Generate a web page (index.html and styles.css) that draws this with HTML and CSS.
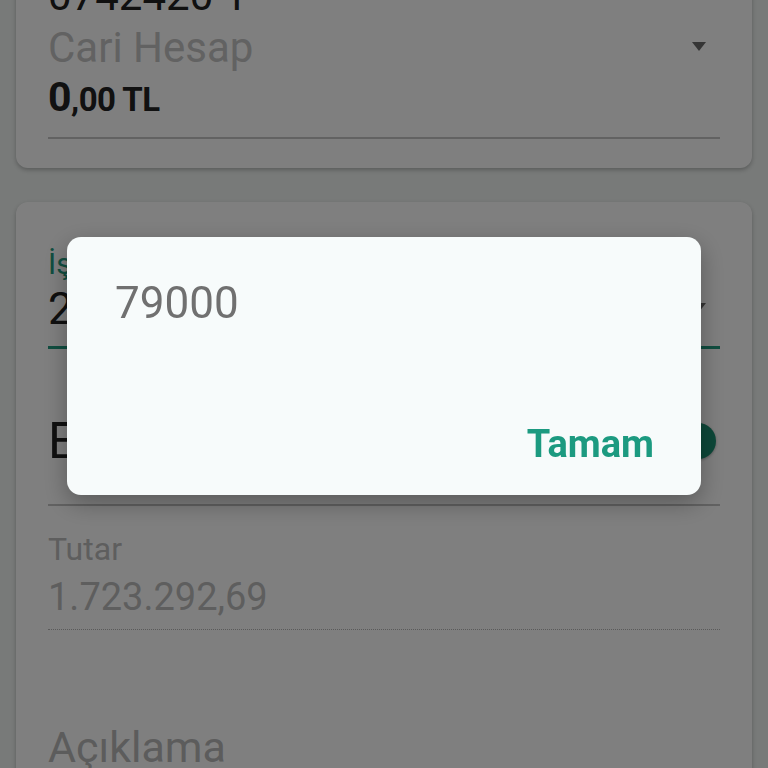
FILE: index.html
```html
<!DOCTYPE html>
<html lang="tr">
<head>
    <meta charset="UTF-8">
    <meta name="viewport" content="width=device-width, initial-scale=1.0">
    <title>Havale</title>
    <link rel="stylesheet" href="styles.css">
</head>
<body>
    <main class="page">
        <section class="card account-card">
            <div class="account-no">0742420 1</div>
            <div class="select-row">
                <span class="select-text">Cari Hesap</span>
                <span class="caret"></span>
            </div>
            <div class="balance"><span class="big">0</span>,00 TL</div>
        </section>

        <section class="card form-card">
            <div class="field field-active">
                <label class="field-label">İşlem Tarihi</label>
                <div class="select-row">
                    <span class="field-value">25.01.2024</span>
                    <span class="caret"></span>
                </div>
            </div>

            <div class="field switch-row">
                <span class="switch-text">EFT</span>
                <span class="switch"><span class="thumb"></span></span>
            </div>

            <div class="field field-disabled">
                <label class="field-label">Tutar</label>
                <div class="amount">1.723.292,69</div>
            </div>

            <div class="field field-hint">Açıklama</div>
        </section>
    </main>

    <div class="scrim"></div>
    <div class="dialog">
        <div class="dialog-text">79000</div>
        <div class="dialog-actions">
            <button class="dialog-button">Tamam</button>
        </div>
    </div>
</body>
</html>
```

FILE: styles.css
```css
body {
    font-family: Roboto, "Noto Sans", Arial, sans-serif;
    margin: 0;
    background-color: #f0f4f2;
    overflow: hidden;
    height: 768px;
}
.page {
    padding: 0 16px;
}
.card {
    background-color: white;
    border-radius: 12px;
    padding: 0 32px;
    box-shadow: 0 2px 4px rgba(0, 0, 0, 0.25);
}

/* hesap kartı (sayfa biraz aşağı kaydırılmış) */
.account-card {
    margin-top: -60px;
    padding-top: 30px;
    padding-bottom: 29px;
}
.account-no {
    font-size: 42px;
    line-height: 52px;
    color: #212121;
}
.select-row {
    display: flex;
    justify-content: space-between;
}
.select-text {
    font-size: 42px;
    line-height: 52px;
    color: #c4c4c4;
}
.caret {
    width: 0;
    height: 0;
    border-left: 7px solid transparent;
    border-right: 7px solid transparent;
    border-top: 9px solid #6a6a6a;
    margin: 20px 14px 0 0;
}
.balance {
    font-size: 33px;
    font-weight: bold;
    line-height: 46px;
    color: #222;
    letter-spacing: -0.5px;
    padding-bottom: 14px;
    border-bottom: 2px solid #c4c4c4;
}
.balance .big {
    font-size: 41px;
}

/* form kartı */
.form-card {
    margin-top: 34px;
    padding-top: 43px;
    height: 700px;
}
.field-label {
    display: block;
    font-size: 30px;
    line-height: 38px;
}
.field-active .field-label {
    color: #229c80;
}
.field-active {
    padding-bottom: 11px;
    border-bottom: 3px solid #229c80;
}
.field-value {
    font-size: 45px;
    line-height: 52px;
    color: #212121;
}
.field-active .caret {
    margin-top: 20px;
}
.switch-row {
    display: flex;
    justify-content: space-between;
    align-items: center;
    margin-top: 62px;
    padding-bottom: 33px;
    border-bottom: 2px solid #c4c4c4;
}
.switch-text {
    font-size: 50px;
    line-height: 60px;
    color: #212121;
}
.switch {
    position: relative;
    width: 64px;
    height: 24px;
    border-radius: 12px;
    background-color: #8fd0bf;
    margin-right: 6px;
}
.switch .thumb {
    position: absolute;
    right: -2px;
    top: -6px;
    width: 36px;
    height: 36px;
    border-radius: 50%;
    background-color: #1b8f72;
    box-shadow: 0 1px 3px rgba(0, 0, 0, 0.3);
}
.field-disabled {
    margin-top: 24px;
}
.field-disabled .field-label {
    font-size: 32px;
    color: #bdbdbd;
}
.amount {
    margin-top: 6px;
    font-size: 38px;
    line-height: 46px;
    color: #bdbdbd;
    padding-bottom: 9px;
    border-bottom: 1px dotted #b5b5b5;
}
.field-hint {
    margin-top: 92px;
    font-size: 43px;
    line-height: 50px;
    color: #b8b8b8;
}

/* dialog */
.scrim {
    position: fixed;
    top: 0;
    left: 0;
    width: 100%;
    height: 100%;
    background-color: rgba(0, 0, 0, 0.5);
}
.dialog {
    position: fixed;
    left: 67px;
    top: 237px;
    width: 634px;
    height: 258px;
    box-sizing: border-box;
    padding: 40px 47px 28px 48px;
    background-color: #f7fbfb;
    border-radius: 14px;
    box-shadow: 0 8px 24px rgba(0, 0, 0, 0.3);
    display: flex;
    flex-direction: column;
    justify-content: space-between;
}
.dialog-text {
    font-size: 44px;
    line-height: 52px;
    color: #707070;
}
.dialog-actions {
    display: flex;
    justify-content: flex-end;
}
.dialog-button {
    font-family: inherit;
    font-size: 38px;
    font-weight: bold;
    line-height: 46px;
    color: #1c9a80;
    background: none;
    border: none;
    padding: 0;
    cursor: pointer;
}
```
